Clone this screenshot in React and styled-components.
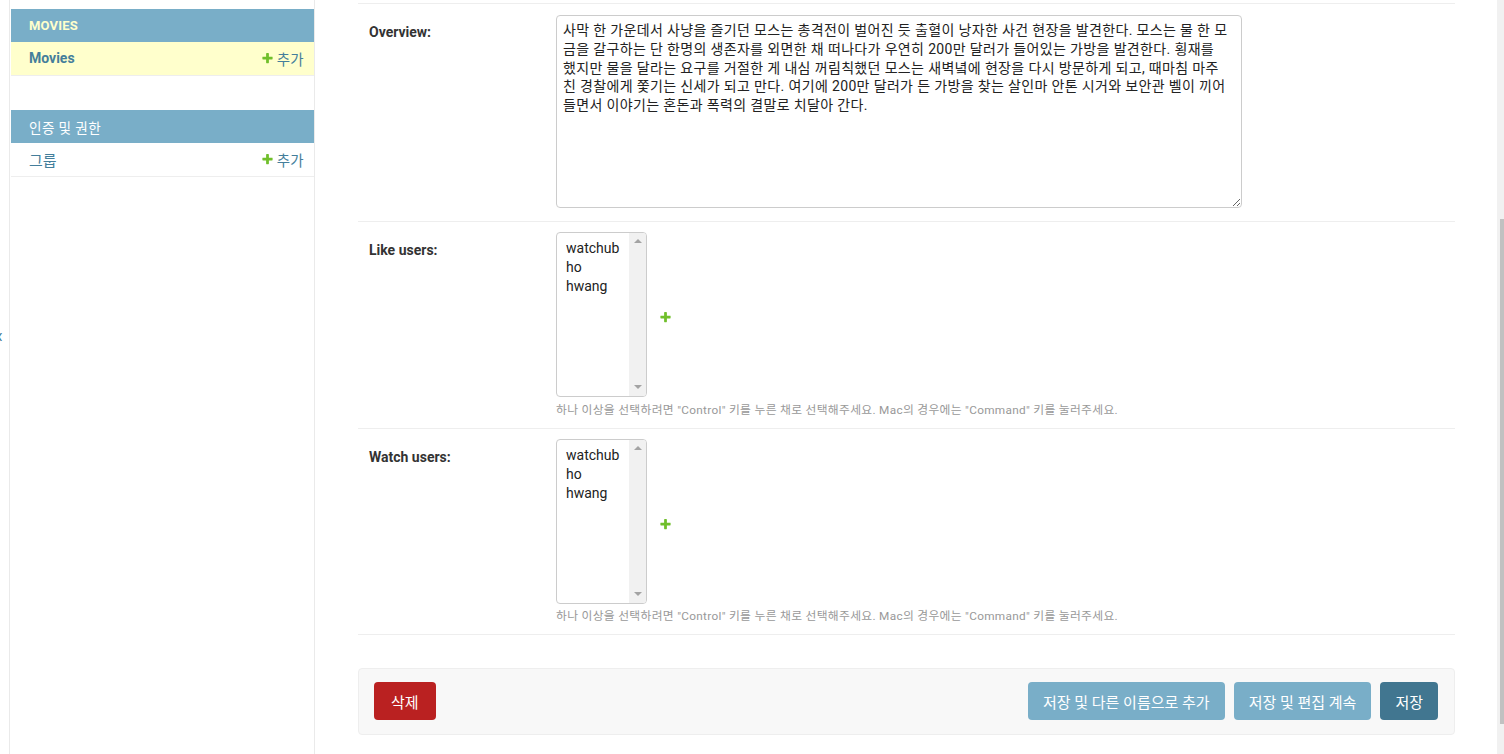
import React from "react";
import styled, { createGlobalStyle } from "styled-components";

const GlobalStyle = createGlobalStyle`
  html, body { margin: 0; padding: 0; background: #fff; }
  body {
    font-family: Roboto, "Noto Sans CJK KR", sans-serif;
    color: #333;
    font-size: 14px;
    overflow: hidden;
  }
  * { box-sizing: border-box; }
`;

const FONT = `Roboto, "Noto Sans CJK KR", sans-serif`;

const Page = styled.div`
  display: flex;
  width: 1504px;
  height: 754px;
  overflow: hidden;
`;

const SidebarToggle = styled.button`
  flex: 0 0 10px;
  width: 10px;
  height: 100%;
  margin: 0;
  border: 0;
  border-right: 1px solid #eaeaea;
  background: #fff;
  color: #447e9b;
  font-family: ${FONT};
  font-size: 20px;
  line-height: 26px;
  padding: 323px 6px 0 0;
  display: flex;
  justify-content: flex-end;
  align-items: flex-start;
  overflow: hidden;
  cursor: pointer;
`;

const Nav = styled.nav`
  flex: 0 0 305px;
  border-right: 1px solid #eaeaea;
  padding: 9px 0 0 1px;
  display: flex;
  flex-direction: column;
  gap: 34px;
`;

const AppModule = styled.div`
  width: 303px;
  display: flex;
  flex-direction: column;
`;

const Caption = styled.div`
  height: 33px;
  display: flex;
  align-items: center;
  padding-left: 18px;
  background: #79aec8;
  color: ${(p) => (p.$current ? "#ffffcc" : "#fff")};
  font-size: ${(p) => (p.$current ? "13px" : "13.6px")};
  font-weight: ${(p) => (p.$current ? 700 : 400)};
  letter-spacing: ${(p) => (p.$current ? "0.2px" : "0.4px")};
`;

const ModelRow = styled.div`
  height: 34px;
  display: flex;
  align-items: center;
  justify-content: space-between;
  padding: 0 10px 1px 18px;
  background: ${(p) => (p.$current ? "#ffffcc" : "#fff")};
  border-bottom: 1px solid #eee;
`;

const ModelLink = styled.a`
  color: #447e9b;
  font-size: ${(p) => (p.$current ? "14px" : "15px")};
  font-weight: ${(p) => (p.$current ? 700 : 400)};
  text-decoration: none;
`;

const AddLink = styled.a`
  display: flex;
  align-items: center;
  gap: 3px;
  color: #447e9b;
  font-size: 14.5px;
  letter-spacing: 0.3px;
  text-decoration: none;
`;

const PlusSvg = ({ size = 13 }) => (
  <svg width={size} height={size} viewBox="0 0 1792 1792" aria-hidden="true">
    <path
      fill="#70bf2b"
      d="M1600 736v192q0 40-28 68t-68 28h-416v416q0 40-28 68t-68 28h-192q-40 0-68-28t-28-68v-416h-416q-40 0-68-28t-28-68v-192q0-40 28-68t68-28h416v-416q0-40 28-68t68-28h192q40 0 68 28t28 68v416h416q40 0 68 28t28 68z"
    />
  </svg>
);

const Main = styled.main`
  flex: 1;
  min-width: 0;
  padding: 3px 42px 0 43px;
  display: flex;
  flex-direction: column;
`;

const Fieldset = styled.div`
  border-top: 1px solid #eee;
`;

const FormRow = styled.div`
  display: grid;
  grid-template-columns: 188px auto;
  align-items: start;
  padding: 10px;
  border-bottom: 1px solid #eee;
`;

const Label = styled.label`
  display: block;
  padding-top: 11px;
  font-size: 14px;
  line-height: 1;
  font-weight: 700;
  color: #333;
  padding-left: 1px;
`;

const TextArea = styled.textarea`
  display: block;
  width: 686px;
  height: 193px;
  margin: 1px 0 3px 0;
  border: 1px solid #ccc;
  border-radius: 4px;
  padding: 5px 6px;
  font-family: ${FONT};
  font-size: 14px;
  line-height: 18.75px;
  letter-spacing: 0.35px;
  color: #222;
  background: #fff;
  outline: none;
`;

const FieldStack = styled.div`
  display: flex;
  flex-direction: column;
  gap: 5px;
`;

const RelatedWrapper = styled.div`
  display: flex;
  align-items: center;
`;

const ListBox = styled.div`
  width: 91px;
  height: 165px;
  border: 1px solid #ccc;
  border-radius: 4px;
  display: flex;
  overflow: hidden;
  background: #fff;
`;

const OptionList = styled.ul`
  flex: 1;
  margin: 0;
  padding: 6px 0 0 9px;
  list-style: none;
  font-size: 14px;
  line-height: 19px;
  color: #222;
`;

const ScrollTrack = styled.div`
  flex: 0 0 17px;
  background: #f1f1f1;
  display: flex;
  flex-direction: column;
  justify-content: space-between;
  align-items: center;
  padding: 6px 0 7px;
`;

const ArrowUp = styled.span`
  width: 0;
  height: 0;
  border-left: 4px solid transparent;
  border-right: 4px solid transparent;
  border-bottom: 4px solid #a3a3a3;
`;

const ArrowDown = styled.span`
  width: 0;
  height: 0;
  border-left: 4px solid transparent;
  border-right: 4px solid transparent;
  border-top: 4px solid #a3a3a3;
`;

const AddRelated = styled.a`
  display: flex;
  margin: 5px 0 0 12px;
`;

const Help = styled.div`
  font-size: 11.8px;
  line-height: ${(p) => (p.$last ? "15px" : "16px")};
  letter-spacing: 0.3px;
  color: #999;
`;

const SubmitRow = styled.div`
  margin-top: 33px;
  display: flex;
  align-items: center;
  justify-content: space-between;
  padding: 13px 16px 14px 15px;
  background: #f8f8f8;
  border: 1px solid #eee;
  border-radius: 4px;
`;

const DeleteLink = styled.a`
  height: 38px;
  display: flex;
  align-items: center;
  padding: 0 17px;
  background: #ba2121;
  color: #fff;
  border-radius: 4px;
  font-size: 15px;
  text-decoration: none;
`;

const ButtonGroup = styled.div`
  display: flex;
  gap: 9px;
`;

const SubmitButton = styled.button`
  height: 38px;
  margin: 0;
  padding: 0 15px;
  border: 0;
  border-radius: 4px;
  background: ${(p) => (p.$default ? "#417690" : "#79aec8")};
  color: #fff;
  font-family: ${FONT};
  font-size: 15px;
  cursor: pointer;
`;

const PageScrollbar = styled.div`
  flex: 0 0 7px;
  background: #f1f1f1;
  padding: 219px 0 0 3px;
`;

const PageThumb = styled.div`
  height: 505px;
  background: #c1c1c1;
`;

const overview =
  "사막 한 가운데서 사냥을 즐기던 모스는 총격전이 벌어진 듯 출혈이 낭자한 사건 현장을 발견한다. 모스는 물 한 모\n" +
  "금을 갈구하는 단 한명의 생존자를 외면한 채 떠나다가 우연히 200만 달러가 들어있는 가방을 발견한다. 횡재를\n" +
  "했지만 물을 달라는 요구를 거절한 게 내심 꺼림칙했던 모스는 새벽녘에 현장을 다시 방문하게 되고, 때마침 마주\n" +
  "친 경찰에게 쫓기는 신세가 되고 만다. 여기에 200만 달러가 든 가방을 찾는 살인마 안톤 시거와 보안관 벨이 끼어\n" +
  "들면서 이야기는 혼돈과 폭력의 결말로 치달아 간다.";

const users = ["watchub", "ho", "hwang"];
const helpText =
  '하나 이상을 선택하려면 "Control" 키를 누른 채로 선택해주세요. Mac의 경우에는 "Command" 키를 눌러주세요.';

const UserSelect = ({ last }) => (
  <FieldStack>
    <RelatedWrapper>
      <ListBox>
        <OptionList>
          {users.map((u) => (
            <li key={u}>{u}</li>
          ))}
        </OptionList>
        <ScrollTrack>
          <ArrowUp />
          <ArrowDown />
        </ScrollTrack>
      </ListBox>
      <AddRelated href="#">
        <PlusSvg size={13} />
      </AddRelated>
    </RelatedWrapper>
    <Help $last={last}>{helpText}</Help>
  </FieldStack>
);

export default function App() {
  return (
    <>
      <GlobalStyle />
      <Page>
        <SidebarToggle>«</SidebarToggle>
        <Nav>
          <AppModule>
            <Caption $current>MOVIES</Caption>
            <ModelRow $current>
              <ModelLink $current href="#">Movies</ModelLink>
              <AddLink href="#">
                <PlusSvg />
                추가
              </AddLink>
            </ModelRow>
          </AppModule>
          <AppModule>
            <Caption>인증 및 권한</Caption>
            <ModelRow>
              <ModelLink href="#">그룹</ModelLink>
              <AddLink href="#">
                <PlusSvg />
                추가
              </AddLink>
            </ModelRow>
          </AppModule>
        </Nav>
        <Main>
          <Fieldset>
            <FormRow>
              <Label>Overview:</Label>
              <TextArea defaultValue={overview} />
            </FormRow>
            <FormRow>
              <Label>Like users:</Label>
              <UserSelect />
            </FormRow>
            <FormRow>
              <Label>Watch users:</Label>
              <UserSelect last />
            </FormRow>
          </Fieldset>
          <SubmitRow>
            <DeleteLink href="#">삭제</DeleteLink>
            <ButtonGroup>
              <SubmitButton>저장 및 다른 이름으로 추가</SubmitButton>
              <SubmitButton>저장 및 편집 계속</SubmitButton>
              <SubmitButton $default>저장</SubmitButton>
            </ButtonGroup>
          </SubmitRow>
        </Main>
        <PageScrollbar>
          <PageThumb />
        </PageScrollbar>
      </Page>
    </>
  );
}
